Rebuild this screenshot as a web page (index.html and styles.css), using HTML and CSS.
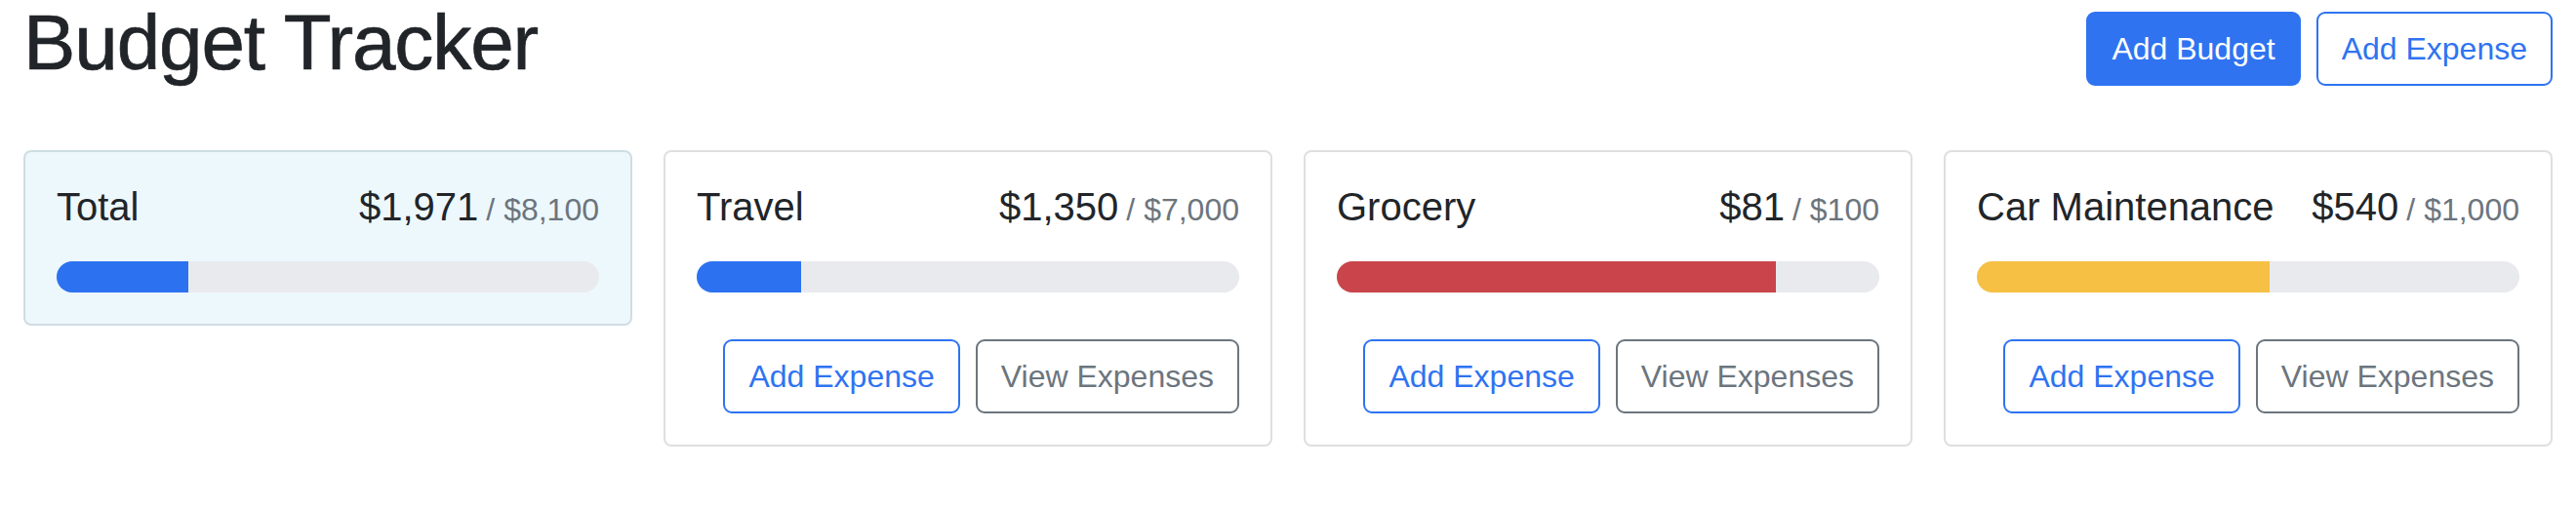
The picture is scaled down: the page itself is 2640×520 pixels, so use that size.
FILE: index.html
```html
<!DOCTYPE html>
<html lang="en">
<head>
<meta charset="utf-8">
<title>Budget Tracker</title>
<link rel="stylesheet" href="styles.css">
</head>
<body>
<div class="container">
  <header class="header">
    <h1 class="title">Budget Tracker</h1>
    <button class="btn btn-primary">Add Budget</button>
    <button class="btn btn-outline-primary">Add Expense</button>
  </header>
  <div class="grid">
    <div class="card card-total">
      <div class="card-title">
        <div class="name">Total</div>
        <div class="amount">$1,971<span class="max">/ $8,100</span></div>
      </div>
      <div class="progress"><div class="bar bar-primary" style="width:24.33%"></div></div>
    </div>
    <div class="card">
      <div class="card-title">
        <div class="name">Travel</div>
        <div class="amount">$1,350<span class="max">/ $7,000</span></div>
      </div>
      <div class="progress"><div class="bar bar-primary" style="width:19.29%"></div></div>
      <div class="actions">
        <button class="btn btn-outline-primary">Add Expense</button>
        <button class="btn btn-outline-secondary">View Expenses</button>
      </div>
    </div>
    <div class="card">
      <div class="card-title">
        <div class="name">Grocery</div>
        <div class="amount">$81<span class="max">/ $100</span></div>
      </div>
      <div class="progress"><div class="bar bar-danger" style="width:81%"></div></div>
      <div class="actions">
        <button class="btn btn-outline-primary">Add Expense</button>
        <button class="btn btn-outline-secondary">View Expenses</button>
      </div>
    </div>
    <div class="card">
      <div class="card-title">
        <div class="name">Car Maintenance</div>
        <div class="amount">$540<span class="max">/ $1,000</span></div>
      </div>
      <div class="progress"><div class="bar bar-warning" style="width:54%"></div></div>
      <div class="actions">
        <button class="btn btn-outline-primary">Add Expense</button>
        <button class="btn btn-outline-secondary">View Expenses</button>
      </div>
    </div>
  </div>
</div>
</body>
</html>
```
FILE: styles.css
```css
* { box-sizing: border-box; }
html, body {
  margin: 0;
  background: #ffffff;
  color: #212529;
  font-family: "Liberation Sans", Arial, sans-serif;
}
.container {
  padding: 0 24px;
}
.header {
  display: flex;
  align-items: center;
  gap: 16px;
  margin-bottom: 54px;
}
.title {
  margin: 0 auto 12px 0;
  font-size: 80px;
  line-height: 88px;
  font-weight: 400;
  letter-spacing: -1.1px;
  color: #212529;
  -webkit-text-stroke: 0.7px #212529;
}
.btn {
  font-family: inherit;
  font-size: 32px;
  line-height: 48px;
  padding: 12px 24px;
  border: 2px solid transparent;
  border-radius: 9px;
  background: transparent;
  cursor: pointer;
  white-space: nowrap;
}
.btn-primary {
  background: #2f73f1;
  border-color: #2f73f1;
  color: #ffffff;
}
.btn-outline-primary {
  border-color: #2f73f1;
  color: #2f73f1;
}
.btn-outline-secondary {
  border-color: #6c757d;
  color: #6c757d;
}
.grid {
  display: grid;
  grid-template-columns: repeat(4, 1fr);
  gap: 32px;
  align-items: start;
}
.card {
  border: 2px solid #dfdfdf;
  border-radius: 8px;
  padding: 32px;
  background: #ffffff;
}
.card-total {
  background: #edf8fd;
  border-color: #cfdde3;
}
.card-title {
  display: flex;
  justify-content: space-between;
  align-items: baseline;
  font-size: 40px;
  line-height: 48px;
  font-weight: 400;
  margin-bottom: 32px;
}
.name { margin-right: 16px; }
.max {
  font-size: 32px;
  line-height: 1;
  color: #6c757d;
  margin-left: 8px;
}
.progress {
  height: 32px;
  border-radius: 16px;
  background: #e9eaee;
  overflow: hidden;
  display: flex;
}
.bar { height: 100%; }
.bar-primary { background: #2c72f0; }
.bar-danger { background: #c9454b; }
.bar-warning { background: #f5c043; }
.actions {
  display: flex;
  justify-content: flex-end;
  gap: 16px;
  margin-top: 48px;
}
```
